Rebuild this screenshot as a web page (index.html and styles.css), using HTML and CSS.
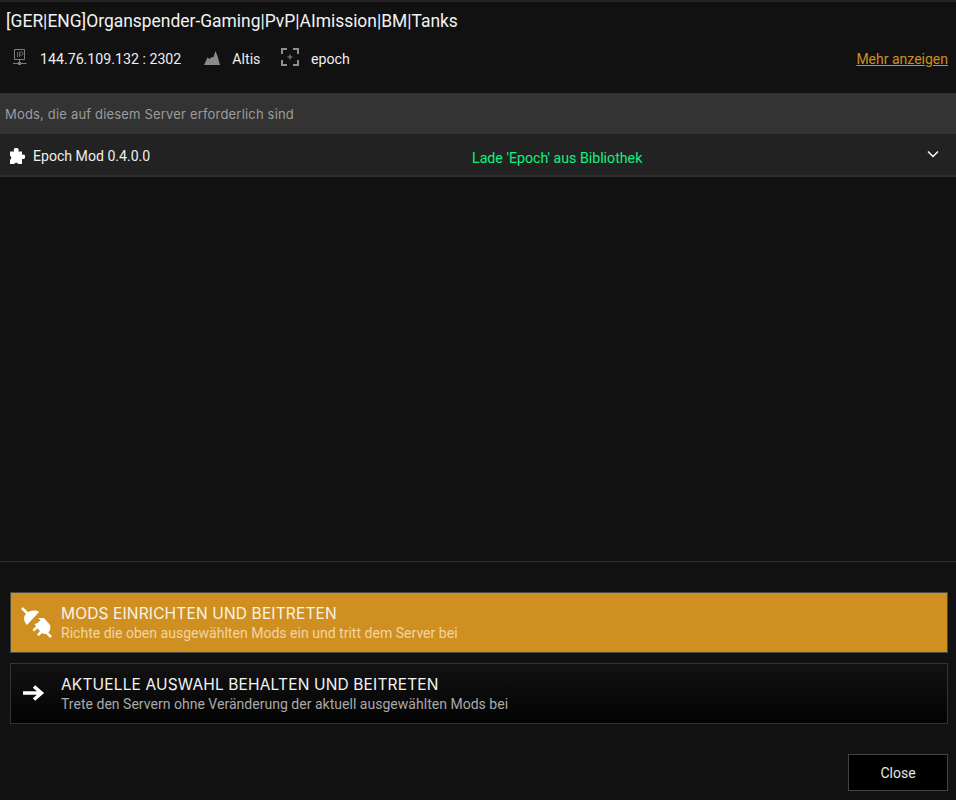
FILE: index.html
```html
<!DOCTYPE html>
<html lang="de">
<head>
<meta charset="utf-8">
<title>Server</title>
<link rel="stylesheet" href="styles.css">
</head>
<body>
<div class="page">
  <header class="head">
    <h1 class="title">[GER|ENG]Organspender-Gaming|PvP|AImission|BM|Tanks</h1>
    <div class="meta">
      <svg class="ico-ip" width="14" height="17" viewBox="0 0 14 17"><path d="M1.500.5h10v10h-10z" fill="none" stroke="#7d7d7d"/><path d="M4.500 3v5M6.500 8V3h2a1.300 1.300 0 0 1 0 3h-2" fill="none" stroke="#7d7d7d" stroke-width=".8"/><path d="M0 14.500h13.500M6.500 11v2" stroke="#7d7d7d"/><path d="M5 13h3v3H5z" fill="#7d7d7d"/></svg>
      <span class="ip">144.76.109.132 : 2302</span>
      <svg class="ico-map" width="16" height="14" viewBox="0 0 16 14"><path d="M0 14 3.500 6.500 5.500 8 7 6.500 9.500 6 11.500 0 13.500 5 16 14z" fill="#8a8a8a"/></svg>
      <span class="map">Altis</span>
      <svg class="ico-mission" width="18" height="18" viewBox="0 0 18 18"><path d="M1 6V1h5M12 1h5v5M17 12v5h-5M6 17H1v-5" fill="none" stroke="#8f8f8f" stroke-width="2"/><path d="M9 6.500v5M6.500 9h5" stroke="#8f8f8f"/></svg>
      <span class="mission">epoch</span>
      <a class="more" href="#">Mehr anzeigen</a>
    </div>
  </header>

  <div class="section">Mods, die auf diesem Server erforderlich sind</div>
  <div class="mod">
    <div class="mod-name">
      <svg width="16" height="16" viewBox="0 0 16 16"><path d="M1 3.500h4.200a2.400 2.400 0 1 1 4 0H13v3.200a2.300 2.300 0 1 1 0 4V16H9.200a2.300 2.300 0 0 0-4 0H1v-4.200a2.200 2.200 0 0 0 0-4z" fill="#fff"/></svg>
      <span>Epoch Mod 0.4.0.0</span>
    </div>
    <div class="mod-status">Lade 'Epoch' aus Bibliothek</div>
    <svg class="chev" width="12" height="8" viewBox="0 0 12 8"><path d="M1 1.500 6 6.500l5-5" fill="none" stroke="#fff" stroke-width="1.500"/></svg>
  </div>

  <main class="spacer"></main>

  <section class="actions">
    <button class="action primary">
      <svg class="action-ico" width="32" height="32" viewBox="0 0 32 32"><path d="M2 1 9 8M25 24l6 6" stroke="#fff" stroke-width="2.500"/><path d="M19 5 7 18C3 14 3 9 7 6 11 3 16 3 19 5z" fill="#fff"/><path d="M24 11l6 7c1.500 4-1 9-6 9l-2-1-3 3-2-1.500 3-3.500-2.500-2.500-3.500 3-1.500-2 3.500-3-1.500-2.500 3-1 3-3-2.500-2z" fill="#fff"/></svg>
      <span class="action-text">
        <span class="action-title">MODS EINRICHTEN UND BEITRETEN</span>
        <span class="action-sub">Richte die oben ausgewählten Mods ein und tritt dem Server bei</span>
      </span>
    </button>
    <button class="action secondary">
      <svg class="action-ico arrow" width="32" height="16" viewBox="0 0 32 16"><path d="M1 8h16M12 1.500 19.500 8 12 14.500" transform="translate(2 0)" fill="none" stroke="#fff" stroke-width="3.500"/></svg>
      <span class="action-text">
        <span class="action-title">AKTUELLE AUSWAHL BEHALTEN UND BEITRETEN</span>
        <span class="action-sub">Trete den Servern ohne Veränderung der aktuell ausgewählten Mods bei</span>
      </span>
    </button>
  </section>

  <footer class="foot"><button class="close">Close</button></footer>
</div>
</body>
</html>
```
FILE: styles.css
```css
* { box-sizing: border-box; }
html, body { margin: 0; height: 100%; background: #111; }
body { font-family: Roboto, "Liberation Sans", sans-serif; color: #fff; overflow: hidden; }
.page { height: 800px; display: flex; flex-direction: column; border-top: 2px solid #232323; }
.head { height: 91px; padding: 9px 8px 0 6px; flex: none; }
.title { margin: 0; font-weight: 400; font-size: 17.430px; line-height: 21px; color: #f2f2f2; }
.meta { display: flex; align-items: center; height: 24px; margin-top: 11px; padding-top: 7px; padding-left: 7px; font-size: 14.200px; color: #eee; }
.ico-ip { margin-right: 13px; margin-top: -3px; }
.ico-map { margin-left: 23px; margin-right: 12px; margin-top: -1px; }
.map { margin-right: 21px; }
.ico-mission { margin-right: 11.500px; margin-top: -4px; }
.more { margin-left: auto; color: #cf8f21; font-size: 14px; }
.section { flex: none; height: 41px; background: #333; color: #9c9c9c; font-family: Inter, Roboto, sans-serif; font-size: 13px; line-height: 43px; padding-left: 5px; letter-spacing: .18px; }
.mod { flex: none; height: 43px; background: #222; border-bottom: 2px solid #2e2e2e; display: flex; align-items: center; position: relative; padding-right: 16px; }
.mod-name { width: 472px; display: flex; align-items: center; gap: 8px; padding-left: 9px; font-size: 14.100px; color: #eee; flex: none; margin-top: 2px; }
.mod-status { color: #10f080; font-size: 14.200px; margin-top: 6px; }
.chev { margin-left: auto; margin-top: -2px; margin-right: 1px; }
.spacer { flex: 1; border-bottom: 1px solid #2f2f2f; }
.actions { flex: none; padding: 30px 8px 0 10px; display: flex; flex-direction: column; gap: 10px; }
.action { width: 938px; height: 61px; display: flex; align-items: center; padding: 0; border: 1px solid #333; font: inherit; color: inherit; text-align: left; }
.primary { background: #cf8f21; border-color: #4a4a44; }
.secondary { background: linear-gradient(#121212, #030303); }
.action-ico { flex: none; margin-left: 9px; margin-right: 9px; }
.arrow { margin-left: 9px; margin-top: -2px; margin-right: 9px; }
.action-text { display: flex; flex-direction: column; }
.action-title { font-family: Inter, Roboto, sans-serif; font-size: 15.500px; line-height: 20px; letter-spacing: .15px; color: #f4f4f4; }
.action-sub { font-size: 14.050px; line-height: 18px; color: #a9a9a9; }
.primary .action-sub { color: #f1d5a3; }
.primary .action-title { color: #fbf3e3; }
.foot { flex: none; display: flex; justify-content: flex-end; padding: 30px 8px 9px 0; }
.close { width: 100px; height: 37px; background: #000; border: 1px solid #444; color: #e6e6e6; font: inherit; font-size: 14px; }
```
